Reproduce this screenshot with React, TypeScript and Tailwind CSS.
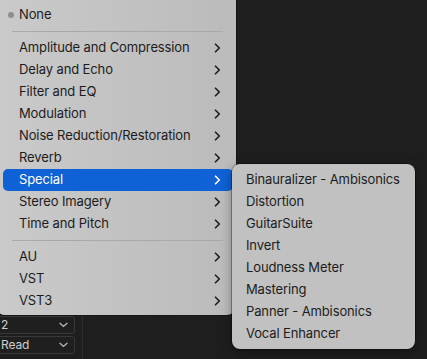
import React from 'react';

const mainGroups: string[][] = [
  [
    'Amplitude and Compression',
    'Delay and Echo',
    'Filter and EQ',
    'Modulation',
    'Noise Reduction/Restoration',
    'Reverb',
    'Special',
    'Stereo Imagery',
    'Time and Pitch',
  ],
  ['AU', 'VST', 'VST3'],
];

const specialItems = [
  'Binauralizer - Ambisonics',
  'Distortion',
  'GuitarSuite',
  'Invert',
  'Loudness Meter',
  'Mastering',
  'Panner - Ambisonics',
  'Vocal Enhancer',
];

function Chevron({ light }: { light?: boolean }) {
  return (
    <svg width="7" height="10" viewBox="0 0 7 10" fill="none">
      <path
        d="M1.5 1.2 L5.3 5 L1.5 8.8"
        stroke={light ? '#ffffff' : '#1c1c1c'}
        strokeWidth="1.6"
        strokeLinecap="round"
        strokeLinejoin="round"
      />
    </svg>
  );
}

function Separator() {
  return (
    <div className="flex h-[11px] items-center pl-[12px] pr-[13px]">
      <div className="h-px w-full bg-[#a9a9a9]" />
    </div>
  );
}

function MenuRow({ label, active }: { label: string; active?: boolean }) {
  return (
    <div
      className={`mx-[3px] flex h-[22px] items-center justify-between rounded-[5px] pl-[16px] pr-[12px] ${
        active ? 'bg-[#0f62d6] text-white' : 'text-[#1c1c1c]'
      }`}
    >
      <span>{label}</span>
      <Chevron light={active} />
    </div>
  );
}

function DarkSelect({ value }: { value: string }) {
  return (
    <div className="flex h-[18px] w-[80px] items-center justify-between rounded-[3px] border border-[#383838] bg-[#1f1f1f] pl-[5px] pr-[6px] text-[12px] text-[#cfcfcf]">
      <span>{value}</span>
      <svg width="9" height="6" viewBox="0 0 9 6" fill="none">
        <path d="M1 1.2 L4.5 4.5 L8 1.2" stroke="#bdbdbd" strokeWidth="1.2" strokeLinecap="round" />
      </svg>
    </div>
  );
}

export default function App() {
  return (
    <div
      className="relative h-[359px] w-[427px] overflow-hidden bg-[#1e1e1e] text-[13px] tracking-[-0.12px]"
      style={{ fontFamily: 'Inter, "Noto Sans", sans-serif' }}
    >
      {/* panel behind the menus */}
      <div className="flex h-full">
        <div className="-ml-[5px] flex w-[88px] flex-col justify-end gap-[2px] border-r border-[#2c2c2c] pb-[5px]">
          <DarkSelect value="2" />
          <DarkSelect value="Read" />
        </div>
      </div>

      {/* main effects menu */}
      <div className="absolute -left-[4px] top-0 w-[240px] rounded-b-[9px] bg-gradient-to-r from-[#cacaca] to-[#bbbbbb] pb-[3px] pl-[4px] pt-[4px] shadow-[0_0_0_1px_rgba(0,0,0,0.25)]">
        <div className="flex h-[22px] items-center gap-[5px] pl-[8px] text-[#1c1c1c]">
          <span className="h-[6px] w-[6px] rounded-full bg-[#8e8e8e]" />
          <span>None</span>
        </div>
        {mainGroups.map((group, gi) => (
          <div key={gi}>
            <Separator />
            {group.map((item) => (
              <MenuRow key={item} label={item} active={item === 'Special'} />
            ))}
          </div>
        ))}
      </div>

      {/* Special submenu */}
      <div className="absolute left-[232px] top-[164px] w-[183px] rounded-[8px] bg-[#c1c1c1] pb-[4px] pt-[5px] shadow-[0_0_0_1px_rgba(0,0,0,0.3),0_4px_12px_rgba(0,0,0,0.35)]">
        {specialItems.map((item) => (
          <div key={item} className="flex h-[22px] items-center pl-[14px] text-[#1c1c1c]">
            {item}
          </div>
        ))}
      </div>
    </div>
  );
}
